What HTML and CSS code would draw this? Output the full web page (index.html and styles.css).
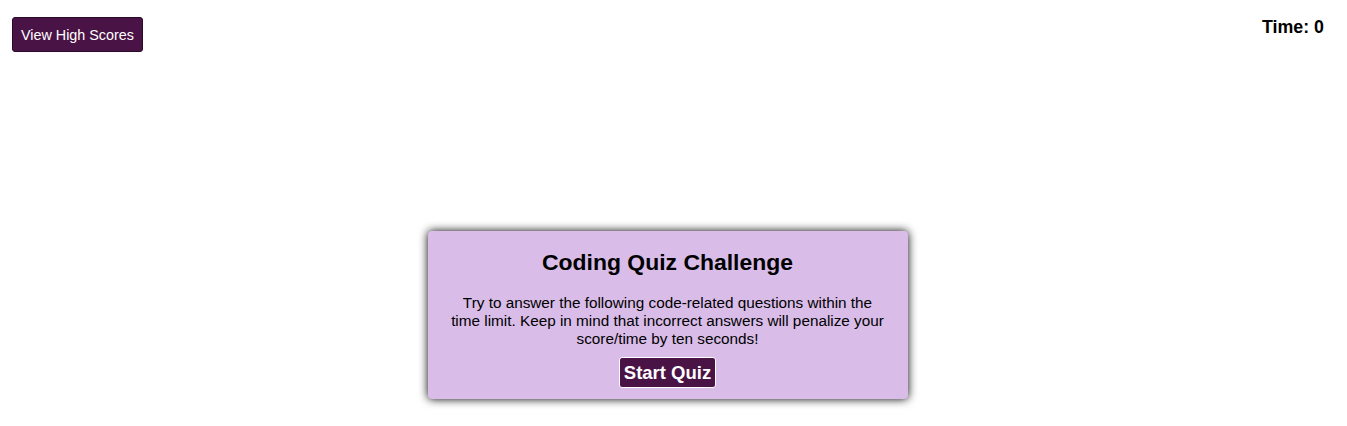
FILE: index.html
```html
<!DOCTYPE html>
<html lang="en">
<head>
<meta charset="utf-8">
<title>Coding Quiz</title>
<link rel="stylesheet" href="styles.css">
</head>
<body>
<header class="top-bar">
  <button class="btn btn-scores" type="button">View High Scores</button>
  <div class="timer">Time: <span>0</span></div>
</header>
<main class="stage">
  <section class="card">
    <h1 class="card-title">Coding Quiz Challenge</h1>
    <p class="card-text">Try to answer the following code-related questions within the time limit. Keep in mind that incorrect answers will penalize your score/time by ten seconds!</p>
    <button class="btn btn-start" type="button">Start Quiz</button>
  </section>
</main>
</body>
</html>
```
FILE: styles.css
```css
* { box-sizing: border-box; }
html, body { margin: 0; padding: 0; background: #ffffff; }
body {
  font-family: "Liberation Sans", Arial, sans-serif;
  color: #000;
  width: 1347px;
  height: 426px;
  overflow: hidden;
}
.top-bar {
  display: flex;
  justify-content: space-between;
  align-items: flex-start;
  padding: 17px 23px 0 12px;
  height: 231px;
}
.btn {
  font-family: "Liberation Sans", Arial, sans-serif;
  background: #4a1346;
  color: #fff;
  cursor: pointer;
}
.btn-scores {
  font-size: 14.35px;
  height: 35px;
  padding: 0 8px;
  border: 1px solid #2a0a27;
  border-radius: 3px;
}
.timer {
  font-size: 17.8px;
  font-weight: bold;
  line-height: 20px;
}
.stage {
  display: flex;
  justify-content: center;
  padding-right: 12px;
}
.card {
  width: 480px;
  height: 168px;
  background: #d9bde8;
  border-radius: 4px;
  box-shadow: 0 0 10px rgba(0,0,0,1);
  display: flex;
  flex-direction: column;
  align-items: center;
  padding: 16px 20px 0;
  text-align: center;
}
.card-title {
  margin: 0;
  font-size: 22.95px;
  line-height: 30px;
}
.card-text {
  margin: 17px 0 9px;
  font-size: 15.3px;
  line-height: 18px;
}
.btn-start {
  font-size: 18.5px;
  font-weight: bold;
  height: 31px;
  padding: 0 4px;
  border: 1px solid #ffffff;
  border-radius: 3px;
}
```
